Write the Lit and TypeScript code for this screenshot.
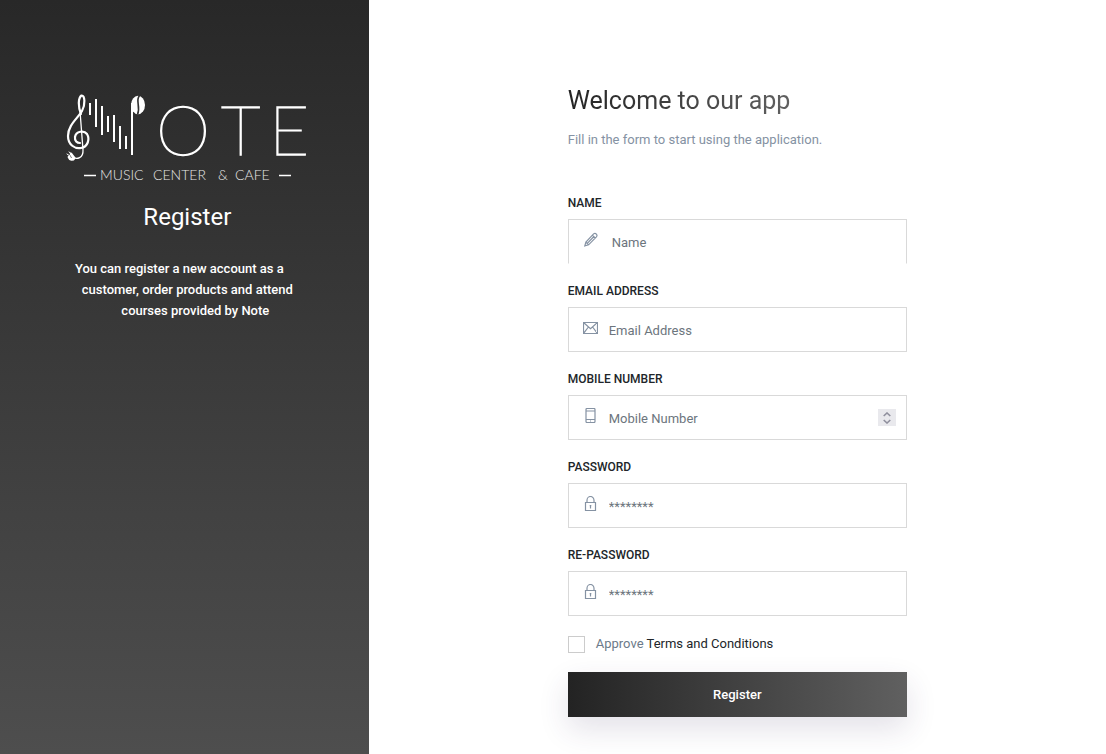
import { LitElement, html, css, svg } from "lit";
import { customElement, property } from "lit/decorators.js";

const icons: Record<string, unknown> = {
  pencil: svg`<path d="M1.8 13.9 2.9 10 10.6 1.9Q12 .7 13.4 2.1 14.6 3.5 13.4 4.8L5.6 12.8Z M2.9 10 5.6 12.8 M9.4 3.1 12.2 6 M4.3 11.3 10.9 4.5"/>`,
  mail: svg`<path d="M.5 2.5h14v11H.5z M.8 2.8 7.5 8.6 14.2 2.8 M.8 13.2 5.4 7 M14.2 13.2 9.6 7"/>`,
  phone: svg`<path d="M4 .5h7q1 0 1 1v12q0 1-1 1H4q-1 0-1-1v-12q0-1 1-1z M3 3h9 M3 11.500h9 M7 13h1"/>`,
  lock: svg`<path d="M2.5 6.500h10v8h-10z M4 6.500V4.300a3.5 3.8 0 0 1 7 0V6.500 M7.5 9.500v3 M6.700 9.700h1.6"/>`,
};

@customElement("note-logo")
export class NoteLogo extends LitElement {
  static styles = css`
    :host { display: block; width: 244px; max-width: 100%; }
    svg { display: block; width: 100%; height: auto; overflow: visible; }
    .line { fill: none; stroke: #fff; stroke-linecap: round; }
    .bars { fill: none; stroke: #fff; stroke-width: 2; }
    .dash { stroke: #fff; stroke-width: 1.3; }
    .word { fill: #fff; stroke: #fff; stroke-width: 1.3; font: 200 69px Lato, sans-serif; }
    .tag { fill: #e6e6e6; font: 300 14px Lato, sans-serif; }
  `;
  render() {
    return html`<svg viewBox="0 0 244 88" role="img" aria-label="Note Music Center &amp; Cafe">
      <g transform="translate(1 -1)">
      <path class="line" stroke-width="2.2" d="M15 21C12 14 12 5 15.500 2.500C19 2 19.500 12 16 18C12 25 2 32 2 43C2 52 9 56 15 55C22 54 24 46 21 41C18 37 10 38 9 44C8.500 48 11 50 14 50"/>
      <path class="line" stroke-width="1.300" d="M14 18 17 57C17.500 65 11 67 6 64"/>
      <path class="line" stroke-width="2.800" d="M3 64C4 67 7 67 8 65L5 61"/>
      <path class="line" stroke-width="1" d="M1 61 4 63M3 59 6 61"/>
      <path class="bars" d="M24 10V22M30 6V34M36 13V42M42 23V39M48 22V49M54 33V56M60 43V56M66 10V62"/>
      <ellipse cx="72" cy="12" rx="7" ry="9.200" fill="#fff"/>
      <path d="M73.500 2.500C69 8 75 13 71.500 21.500" fill="none" stroke="#303030" stroke-width="1.600"/>
      </g>
      <text class="word" x="91" y="61">O</text>
      <text class="word" x="156" y="61">T</text>
      <text class="word" x="204" y="61">E</text>
      <path class="dash" d="M19 81.500H31M214 81.500H226"/>
      <text class="tag" x="35" y="86">MUSIC</text>
      <text class="tag" x="88" y="86">CENTER</text>
      <text class="tag" x="153" y="86">&amp;</text>
      <text class="tag" x="170" y="86">CAFE</text>
    </svg>`;
  }
}

@customElement("form-field")
export class FormField extends LitElement {
  @property() label = "";
  @property() type = "text";
  @property() icon = "pencil";
  @property() placeholder = "";
  @property({ type: Boolean, reflect: true }) open = false;

  static styles = css`
    :host { display: block; }
    label { display: block; margin-bottom: 6px; font-size: 12px; line-height: 20px; font-weight: 500; color: #212529; text-transform: uppercase; }
    .box { display: flex; align-items: center; height: 45px; box-sizing: border-box; border: 1px solid #d9d9d9; padding: 0 10px 0 14px; background: #fff; }
    :host([open]) .box { border-bottom-color: transparent; }
    .icon { flex: none; width: 15px; height: 15px; margin-bottom: 4px; fill: none; stroke: #8592a3; stroke-width: 1.2; }
    input { flex: 1; min-width: 0; height: 100%; margin: 0; padding: 1px 0 0 11px; border: 0; outline: 0; background: none; font: 400 13px Roboto, sans-serif; color: #495057; appearance: textfield; }
    :host([open]) input { padding-left: 14px; }
    input::placeholder { color: #6c757d; opacity: 1; }
    input::-webkit-inner-spin-button { appearance: none; }
    .step { flex: none; width: 18px; height: 17px; padding: 0; border: 0; background: #e9e9ed; display: grid; place-items: center; }
    .step svg { width: 8px; height: 12px; fill: none; stroke: #8f8f9d; stroke-width: 1.6; }
  `;
  private bump() {
    (this.renderRoot.querySelector("input") as HTMLInputElement).stepUp();
  }
  render() {
    return html`<label for="control">${this.label}</label>
      <div class="box">
        <svg class="icon" viewBox="0 0 15 15" aria-hidden="true">${icons[this.icon]}</svg>
        <input id="control" type=${this.type} placeholder=${this.placeholder} />
        ${this.type === "number"
          ? html`<button class="step" type="button" aria-label="Increase" @click=${this.bump}>
              <svg viewBox="0 0 8 12"><path d="M.7 4 4 1 7.300 4M.7 8 4 11 7.300 8" /></svg>
            </button>`
          : ""}
      </div>`;
  }
}

@customElement("app-root")
export class AppRoot extends LitElement {
  static styles = css`
    :host { display: grid; grid-template-columns: 1fr 2fr; min-height: 100vh; font-family: Roboto, sans-serif; background: #fff; }
    .side { display: flex; flex-direction: column; align-items: center; box-sizing: border-box; padding: 94px 0 32px 6px; background: linear-gradient(#282828, #4e4e4e); color: #fff; text-align: center; }
    .side h1 { margin: 17px 0 23px; font-size: 24px; line-height: 36px; font-weight: 400; }
    .side p { margin: 0; font-size: 13px; line-height: 21px; font-weight: 500; }
    .side span { display: block; }
    .first { padding-right: 16px; }
    .last { padding-left: 16px; }
    main { padding: 81px 0 36px; }
    form { width: 46%; margin: 0 auto; }
    h2 { width: fit-content; margin: 0; font-size: 25px; line-height: 40px; font-weight: 400; background: linear-gradient(90deg, #232323, #606060); background-clip: text; color: transparent; }
    .intro { margin: 8px 0 42px; font-size: 13px; line-height: 22px; color: #8592a3; white-space: nowrap; }
    .fields { display: grid; gap: 17px; }
    .terms { display: flex; align-items: center; gap: 11px; margin: 17px 0; font-size: 13px; line-height: 22px; color: #6c7a89; }
    .terms input { appearance: none; width: 17px; height: 17px; margin: 0; border: 1px solid #ccc; background: #fff; }
    .terms input:checked { background: #444; }
    .terms a { color: #212529; text-decoration: none; }
    .submit { display: block; width: 100%; height: 45px; border: 0; background: linear-gradient(90deg, #232323, #606060); box-shadow: 0 12px 30px rgba(60, 40, 90, 0.14); color: #fff; font: 500 13px Roboto, sans-serif; }
  `;
  render() {
    return html`
      <aside class="side">
        <note-logo></note-logo>
        <h1>Register</h1>
        <p>
          <span class="first">You can register a new account as a</span>
          <span>customer, order products and attend</span>
          <span class="last">courses provided by Note</span>
        </p>
      </aside>
      <main>
        <form @submit=${(e: Event) => e.preventDefault()}>
          <h2>Welcome to our app</h2>
          <p class="intro">Fill in the form to start using the application.</p>
          <div class="fields">
            <form-field open label="Name" placeholder="Name" icon="pencil"></form-field>
            <form-field label="Email Address" placeholder="Email Address" type="email" icon="mail"></form-field>
            <form-field label="Mobile Number" placeholder="Mobile Number" type="number" icon="phone"></form-field>
            <form-field label="Password" placeholder="********" type="password" icon="lock"></form-field>
            <form-field label="Re-Password" placeholder="********" type="password" icon="lock"></form-field>
          </div>
          <div class="terms">
            <input id="terms" type="checkbox" />
            <label for="terms">Approve <a href="#terms">Terms and Conditions</a></label>
          </div>
          <button class="submit">Register</button>
        </form>
      </main>
    `;
  }
}
